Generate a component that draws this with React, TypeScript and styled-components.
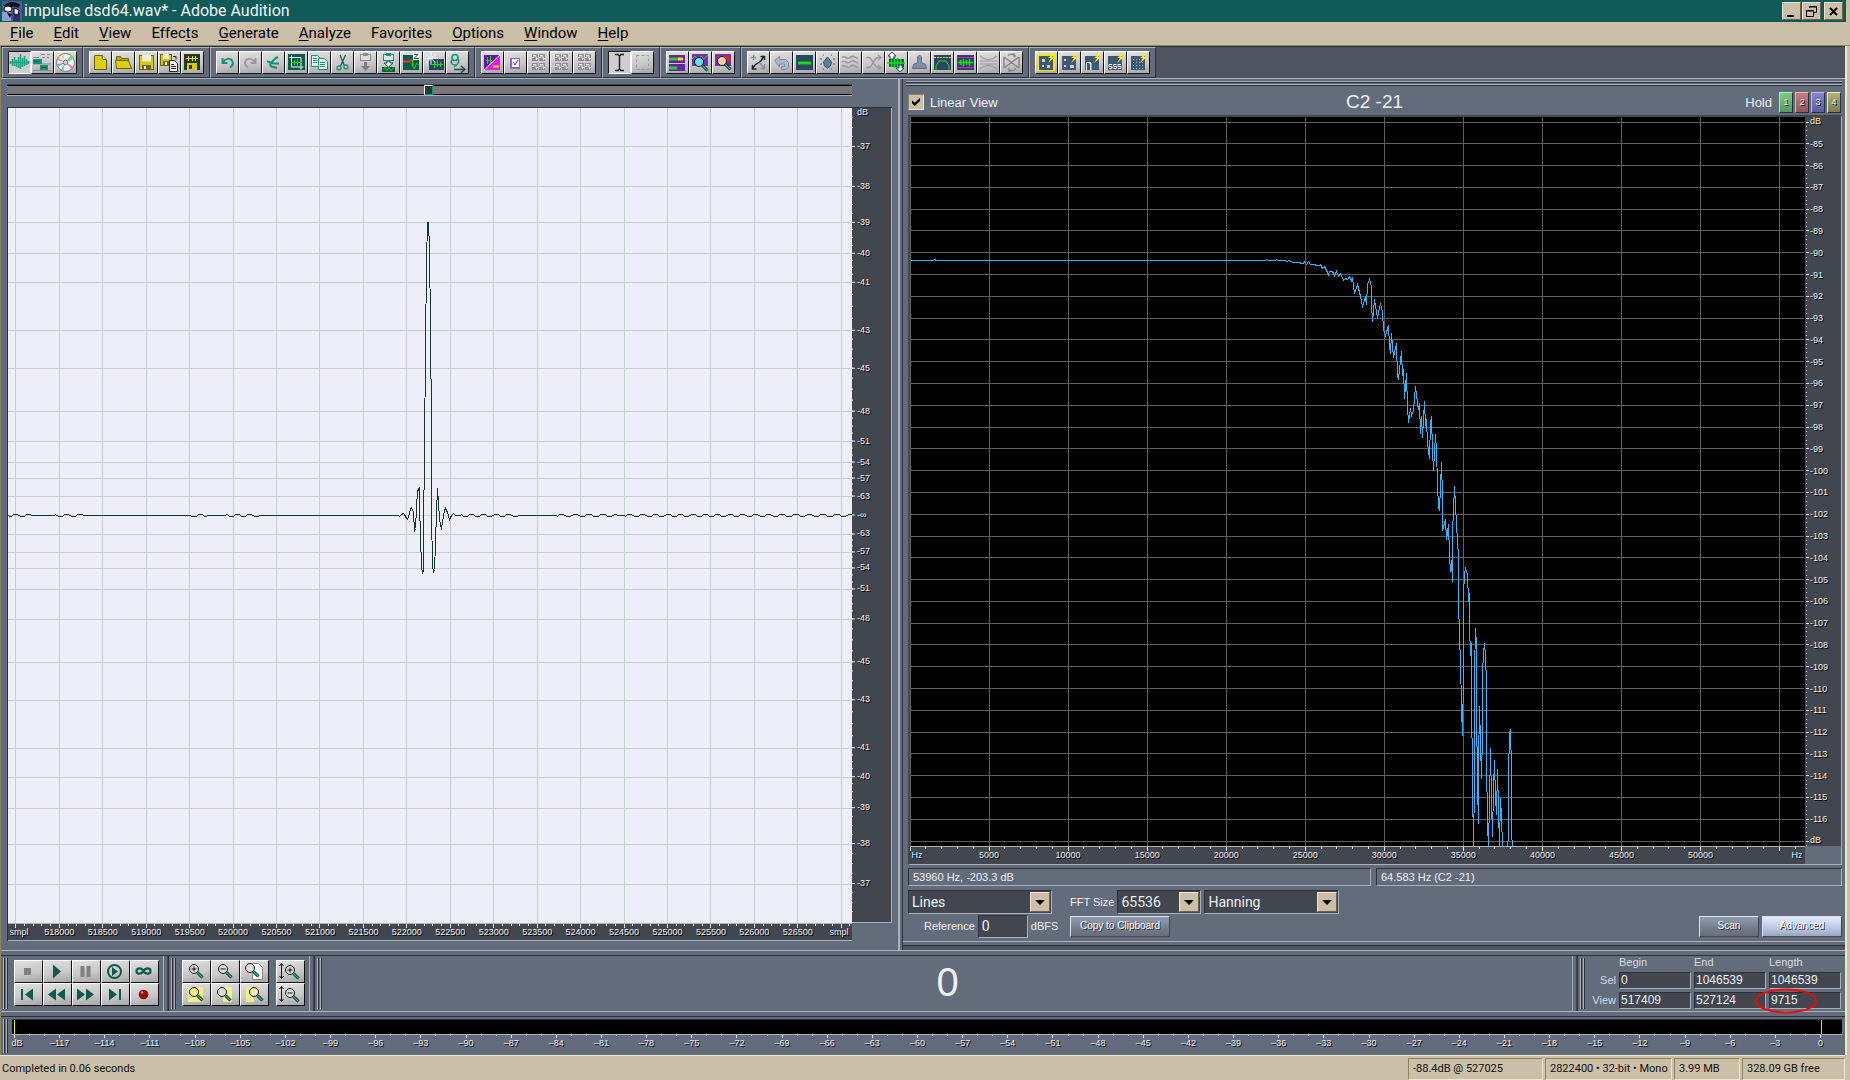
import React from "react";
import styled, { createGlobalStyle, css } from "styled-components";

const c = {
  teal: "#115a5a",
  sand: "#cbbfa8",
  sandLight: "#ece4d4",
  sandDark: "#8f8460",
  panel: "#636c7b",
  strip: "#4f5560",
  well: "#41464f",
  light: "#a9b0bc",
  dark: "#2c3038",
  text: "#eef0f4",
  wave: "#12382c",
  trace: "#2fb8ff",
};

const ui = `Roboto, "Liberation Sans", sans-serif`;
const sans = `"Liberation Sans", Arial, sans-serif`;

const GlobalStyle = createGlobalStyle`
  *, *::before, *::after { box-sizing: border-box; }
  body { margin: 0; background: ${c.sand}; font-family: ${sans}; }
  button, input, select { font: inherit; color: inherit; margin: 0; padding: 0; border: 0; border-radius: 0; background: none; }
  svg { display: block; }
`;

/* ---------- window frame ---------- */

const Frame = styled.div`
  display: flex;
  flex-direction: column;
  min-height: 100vh;
  background: ${c.sand};
`;

const TitleBar = styled.header`
  display: flex;
  align-items: center;
  height: 22px;
  margin-right: 4px;
  padding: 0 3px 0 2px;
  background: ${c.teal};
  color: #f2f4f2;
  font: 16px/22px ${ui};
`;

const TitleText = styled.h1`
  flex: 1;
  margin: 0 0 0 2px;
  font: inherit;
`;

const CaptionButton = styled.button<{ $apart?: boolean }>`
  display: grid;
  place-items: center;
  width: 19px;
  height: 18px;
  margin-left: ${(p) => (p.$apart ? 3 : 1)}px;
  background: ${c.sand};
  border: 1px solid;
  border-color: ${c.sandLight} #6b6248 #6b6248 ${c.sandLight};
`;

const MenuBar = styled.nav`
  display: flex;
  height: 24px;
  border-bottom: 1px solid ${c.sandDark};
  font: 15px/23px ${ui};
  color: #000;
`;

const MenuItem = styled.button`
  padding: 0 10px;
  u { text-underline-offset: 2px; text-decoration-thickness: 1px; }
`;

const Body = styled.div`
  display: flex;
  flex: 1;
  flex-direction: column;
  margin-right: 3px;
  border-left: 1px solid ${c.sandDark};
  border-right: 2px solid ${c.sandLight};
  background: ${c.panel};
  color: ${c.text};
`;

/* ---------- toolbar ---------- */

const Toolbar = styled.div`
  display: flex;
  height: 32px;
  padding-left: 1px;
  background: ${c.strip};
  border-top: 1px solid ${c.dark};
`;

const ToolGroup = styled.div`
  display: flex;
  align-items: center;
  padding: 0 5px;
  background: ${c.panel};
  border: 1px solid;
  border-color: ${c.light} ${c.dark} ${c.dark} ${c.light};
`;

const metal = css`
  background: linear-gradient(170deg, #e2e2e2 0%, #d2d2d2 30%, #c9c9cb 55%, #a6a6a8 100%);
`;

const ToolButton = styled.button<{ $pressed?: boolean }>`
  display: grid;
  place-items: center;
  width: 23px;
  height: 23px;
  border: 1px solid;
  ${(p) =>
    p.$pressed
      ? css`
          background: #d0cdd0;
          border-color: #1b1b1b #fff #fff #1b1b1b;
        `
      : css`
          ${metal}
          border-color: #fff #111 #111 #fff;
        `}
`;

/* ---------- panes ---------- */

const Panes = styled.main`
  display: grid;
  flex: 1;
  grid-template-columns: minmax(0, 897fr) 5px minmax(0, 942fr);
  border-top: 1px solid ${c.light};
`;

const WavePane = styled.section`
  display: flex;
  flex-direction: column;
  padding: 5px 6px 9px 6px;
`;

const Splitter = styled.div`
  background: ${c.panel};
  border-left: 2px solid ${c.light};
  border-right: 1px solid ${c.dark};
`;

const ScrollTrack = styled.div`
  display: grid;
  grid-template-columns: 417fr 9fr 419fr;
  height: 12px;
  margin: 0 40px 11px 0;
  background: #79777b;
  border-top: 1px solid ${c.well};
  border-bottom: 1px solid ${c.light};
  box-shadow: inset 0 1px 0 #000, inset 0 -1px 0 #000;
`;

const ScrollThumb = styled.button`
  grid-column: 2;
  background: #1c3c30;
  border: 1px solid;
  border-color: #fff #0d9a60 #0d9a60 #fff;
`;

const WaveFrame = styled.div`
  display: grid;
  flex: 1;
  grid-template-columns: minmax(0, 1fr) 40px;
  grid-template-rows: minmax(0, 1fr) 18px;
  border-top: 1px solid ${c.dark};
  border-left: 1px solid ${c.dark};
`;

const Plot = styled.div<{ $bg: string }>`
  min-height: 200px;
  background: ${(p) => p.$bg};
  contain: size;
  svg { width: 100%; height: 100%; }
`;

const Ruler = styled.div<{ $right?: boolean; $bottom?: boolean; $top?: boolean; $bg?: string }>`
  position: relative;
  background: ${(p) => p.$bg ?? c.well};
  border: 0 solid ${c.light};
  border-right-width: ${(p) => (p.$right ? 1 : 0)}px;
  border-bottom-width: ${(p) => (p.$bottom ? 1 : 0)}px;
  border-top-width: ${(p) => (p.$top ? 1 : 0)}px;
  font: 9px/12px ${sans};
  text-shadow: 1px 1px 0 #000;
  contain: size;
  svg { width: 100%; height: 100%; }
`;

const RowLabel = styled.span`
  position: absolute;
  left: 5px;
  transform: translateY(-50%);
  white-space: nowrap;
`;

const ColumnLabel = styled.span`
  position: absolute;
  top: 2px;
  transform: translateX(-50%);
  white-space: nowrap;
`;

const SpectrumPane = styled.section`
  display: flex;
  flex-direction: column;
  padding-top: 2px;
`;

const SpectrumBody = styled.div`
  display: flex;
  flex: 1;
  flex-direction: column;
  padding: 0 3px 3px 5px;
`;

const PaneGrip = styled.div`
  height: 5px;
  margin: 0 0 0 -2px;
  border: 1px solid ${c.dark};
  border-width: 0 0 1px;
  background: linear-gradient(${c.light} 1px, ${c.dark} 1px 2px, ${c.panel} 2px 3px, ${c.light} 3px);
`;

const PaneFoot = styled.div`
  height: 9px;
  border-top: 1px solid ${c.light};
  border-bottom: 4px solid ${c.strip};
  box-shadow: inset 0 -1px 0 ${c.dark};
`;

const SpectrumHead = styled.div`
  display: grid;
  grid-template-columns: 1fr auto 1fr;
  align-items: center;
  height: 29px;
  padding: 3px 1px 0 0;
  font-size: 13px;
`;

const CheckLabel = styled.label`
  display: flex;
  align-items: center;
  gap: 6px;
`;

const Check = styled.input`
  appearance: none;
  display: grid;
  place-items: center;
  width: 16px;
  height: 16px;
  background: ${c.sand};
  border: 1px solid;
  border-color: ${c.sandDark} ${c.sandLight} ${c.sandLight} ${c.sandDark};
  &:checked::after {
    content: "";
    width: 8px;
    height: 8px;
    background: #000;
    clip-path: polygon(0 30%, 35% 60%, 100% 0, 100% 36%, 35% 100%, 0 66%);
  }
`;

const NoteName = styled.h2`
  margin: 0;
  font: 19px/22px ${sans};
`;

const HoldSet = styled.div`
  display: flex;
  align-items: center;
  justify-content: flex-end;
  gap: 2px;
`;

const HoldCaption = styled.span`
  margin-right: 5px;
`;

const HoldButton = styled.button<{ $hue: string; $edge: string }>`
  width: 14px;
  height: 21px;
  background: linear-gradient(${(p) => p.$edge}44, #0000 40%, #00000033), ${(p) => p.$hue};
  border: 1px solid;
  border-color: ${(p) => p.$edge} ${c.dark} ${c.dark} ${(p) => p.$edge};
  font: 9px/19px ${sans};
  text-shadow: 1px 1px 0 #000;
`;

const SpectrumFrame = styled.div`
  display: grid;
  flex: 1;
  grid-template-columns: minmax(0, 1fr) 36px;
  grid-template-rows: minmax(0, 1fr) 18px;
  border: 1px solid;
  border-width: 2px 1px 1px 2px;
  border-color: ${c.well} ${c.light} ${c.light} ${c.well};
`;

const Readouts = styled.div`
  display: grid;
  grid-template-columns: 463fr 466fr;
  gap: 5px;
  margin: 3px 0 4px;
`;

const Readout = styled.output`
  height: 18px;
  padding-left: 4px;
  border: 1px solid;
  border-color: ${c.dark} ${c.light} ${c.light} ${c.dark};
  font: 11px/16px ${sans};
`;

const Controls = styled.div`
  display: flex;
  font-size: 11px;
`;

const ControlColumn = styled.div<{ $width?: number; $fill?: boolean }>`
  width: ${(p) => (p.$width ? `${p.$width}px` : "auto")};
  flex: ${(p) => (p.$fill ? 1 : "none")};
`;

const ControlRow = styled.div<{ $end?: boolean; $indent?: boolean }>`
  display: flex;
  align-items: center;
  justify-content: ${(p) => (p.$end ? "flex-end" : "flex-start")};
  gap: 3px;
  height: 24px;
  padding-left: ${(p) => (p.$indent ? 16 : 0)}px;
`;

const sunken = css`
  background: ${c.well};
  border: 1px solid;
  border-color: ${c.dark} ${c.light} ${c.light} ${c.dark};
`;

const Combo = styled.span<{ $width: number }>`
  display: flex;
  width: ${(p) => p.$width}px;
  height: 24px;
  padding: 1px;
  ${sunken}
`;

const ComboSelect = styled.select`
  appearance: none;
  flex: 1;
  min-width: 0;
  padding-left: 2px;
  font: 14px/20px ${ui};
`;

const ComboArrow = styled.span`
  display: grid;
  place-items: center;
  width: 20px;
  background: ${c.sand};
  border: 1px solid;
  border-color: ${c.sandLight} #6b6248 #6b6248 ${c.sandLight};
  &::after {
    content: "";
    border: 5px solid transparent;
    border-top-color: #000;
    border-bottom: 0;
  }
`;

const RefInput = styled.input`
  width: 50px;
  height: 23px;
  padding-left: 3px;
  ${sunken}
  font: 14px/20px ${ui};
`;

const PushButton = styled.button<{ $width: number; $lit?: boolean }>`
  width: ${(p) => p.$width}px;
  height: 21px;
  background: ${(p) =>
    p.$lit ? "linear-gradient(#e4ecff, #b9c6e2 60%, #9aa6c0)" : "linear-gradient(#929eb0, #737c8c 60%, #666e7c)"};
  border: 1px solid;
  border-color: #d5e3f2 ${c.well} ${c.well} #d5e3f2;
  font: 10px/18px ${sans};
  color: #fff;
  text-shadow: 1px 1px 0 ${c.dark};
`;

/* ---------- docks ---------- */

const DockRule = styled.div`
  height: 6px;
  border-top: 1px solid ${c.light};
  border-bottom: 1px solid ${c.dark};
`;

const Dock = styled.section`
  display: flex;
  height: 55px;
`;

const DockGroup = styled.div<{ $fill?: boolean }>`
  display: flex;
  flex: ${(p) => (p.$fill ? 1 : "none")};
  padding-left: 2px;
`;

const Grip = styled.div`
  flex: none;
  width: 6px;
  margin: 2px 0;
  background: linear-gradient(90deg, ${c.light} 1px, ${c.dark} 1px 2px, ${c.panel} 2px 3px, ${c.light} 3px 4px, ${c.dark} 4px 5px, ${c.panel} 5px);
`;

const DockEdge = styled.div`
  flex: none;
  width: 6px;
  border-left: 1px solid ${c.light};
  border-right: 1px solid ${c.dark};
  box-shadow: inset -1px 0 0 ${c.well};
`;

const KeyPad = styled.div<{ $cols: number; $after: number }>`
  display: grid;
  grid-template-columns: repeat(${(p) => p.$cols}, 29px);
  align-content: start;
  padding-top: 4px;
  margin: 0 ${(p) => p.$after}px 0 5px;
`;

const Columns = styled.div`
  display: flex;
`;

const Key = styled.button`
  display: grid;
  place-items: center;
  height: 23px;
  padding-right: 2px;
  ${metal}
  border: 1px solid;
  border-color: #fff #111 #111 #fff;
`;

const Counter = styled.output`
  flex: 1;
  font: 40px/53px ${sans};
  text-align: center;
`;

const Range = styled.div`
  display: grid;
  grid-template-columns: 30px repeat(3, 72px);
  grid-template-rows: 13px 17px 17px;
  gap: 3px;
  padding-right: 4px;
  font-size: 11px;
  line-height: 13px;
  color: #d7dbe2;
`;

const RangeName = styled.span`
  align-self: center;
  text-align: right;
`;

const RangeCell = styled.div`
  position: relative;
  display: flex;
`;

const RangeInput = styled.input`
  width: 100%;
  padding-left: 1px;
  ${sunken}
  font: 12px/15px ${sans};
  color: ${c.text};
`;

const Ring = styled.svg`
  position: absolute;
  left: -15px;
  top: -4px;
  width: 64px;
  height: 26px;
  pointer-events: none;
`;

const MeterDock = styled.section`
  display: flex;
  height: 38px;
  padding: 0 3px 0 2px;
`;

const Meter = styled.div`
  display: flex;
  flex: 1;
  flex-direction: column;
  margin: 2px 0 2px 3px;
`;

const MeterBar = styled.div`
  display: grid;
  grid-template-columns: 2fr 1px 1807fr 1px 20fr;
  height: 15px;
  background: #000;
  border-top: 1px solid ${c.dark};
  i:nth-child(1) { grid-column: 2; background: #ff0; }
  i:nth-child(2) { grid-column: 4; background: #c8ccd2; }
`;

const MeterRuler = styled(Ruler)`
  flex: 1;
`;

const StatusBar = styled.footer`
  display: flex;
  gap: 2px;
  height: 25px;
  margin-right: 5px;
  padding-top: 2px;
  border-top: 1px solid ${c.sandLight};
  font: 11px/22px ${ui};
  color: #111;
`;

const StatusMessage = styled.span`
  flex: 1;
  padding-left: 2px;
`;

const StatusCell = styled.span<{ $width: number }>`
  width: ${(p) => p.$width}px;
  padding-left: 4px;
  border: 1px solid;
  border-color: ${c.sandDark} ${c.sandLight} ${c.sandLight} ${c.sandDark};
  line-height: 20px;
  white-space: nowrap;
`;

/* ---------- icons ---------- */

const g1 = "#17917a";
const g2 = "#0f5a4c";
const lime = "#11e011";
const navy = "#2c4560";
const grey = "#9b9b9d";

const S = ({ d, s = g2, w = 1, f = "none" }: { d: string; s?: string; w?: number; f?: string }) => (
  <path d={d} stroke={s} strokeWidth={w} fill={f} />
);
const B = ({ x, y, w, h, f }: { x: number; y: number; w: number; h: number; f: string }) => (
  <rect x={x} y={y} width={w} height={h} fill={f} />
);

const bolt = <S d="M18 1l-6 5h3l-3 5 7-6h-3l3-4z" s="none" f="#ffee10" />;
const floppy = (x: number, y: number, s: number) => (
  <g>
    <B x={x} y={y} w={s} h={s} f="#6b6400" />
    <B x={x + 1} y={y + 1} w={s - 2} h={s - 2} f="#d6c90e" />
    <B x={x + 3} y={y} w={s - 6} h={s / 2 - 1} f="#eeeedd" />
    <B x={x + 3} y={y + s - 5} w={s - 6} h={4} f="#6b6400" />
    <B x={x + 5} y={y + s - 4} w={2} h={3} f="#eee" />
  </g>
);
const groupGrid = (
  <g>
    {[2, 11].map((y) =>
      [4, 11].map((x) => (
        <g key={`${x}${y}`}>
          <B x={x} y={y} w={6} h={7} f="#8f8f91" />
          <S d={`M${x} ${y + 3.5}h2v-2h2v3h2M${x + 1} ${y + 1.5}h1M${x + 4} ${y + 5.5}h1`} s="#e6e6e6" />
        </g>
      )),
    )}
  </g>
);
const clip = (stroke: string, fill: string) => (
  <g>
    <B x={5} y={2} w={11} h={7} f={stroke} />
    <B x={6} y={3} w={9} h={5} f={fill} />
    <B x={8} y={1} w={5} h={3} f={stroke} />
  </g>
);
const rackBox = <B x={3} y={4} w={14} h={14} f="#40586f" />;
const lens = (x: number, y: number, fill = "#dcdcdc") => (
  <g>
    <circle cx={x} cy={y} r={4.5} stroke="#111" fill={fill} />
    <S d={`M${x + 3.5} ${y + 3.5}l5 5`} s="#111" w={3} />
    <S d={`M${x + 3.5} ${y + 3.5}l5 5`} s="#20c090" w={1.4} />
  </g>
);

const icons: Record<string, React.ReactNode> = {
  wave: (
    <path
      d="M1.500 9v3M3.500 7v7M5.500 5v9M7.500 8v7M9.500 5v11M11.500 2v15M13.500 6v9M15.500 4v10M17.500 7v6M19.500 9v3M1 10.500h19"
      stroke="#22a585"
      strokeWidth={1.6}
    />
  ),
  multitrack: (
    <g>
      <S d="M9 2.5h4M15 2.5h3M10 5.5h3M15 5.5h2M1 5.5h6M1 12h18M1 18.5h18" s="#8b8b8b" />
      <B x={1} y={7} w={9} h={5} f={g1} />
      <B x={8} y={13} w={8} h={5} f={g1} />
      <S d="M2 9.5h6M9 15.5h6" s={g2} />
    </g>
  ),
  cd: (
    <g>
      <circle cx={10.5} cy={10.5} r={9} fill="#f3f3f6" stroke="#777" />
      <S d="M10.5 10.5L6 3l2-1z" s="none" f="#e6e020" />
      <S d="M10.5 10.5L16 3l3 4z" s="none" f="#6fd890" />
      <S d="M10.5 10.5L2 12l1 3z" s="none" f="#7ac" />
      <S d="M10.5 10.5L18 14l-2 3z" s="none" f="#e08ad8" />
      <S d="M10.5 10.5L8 19l-2-1z" s="none" f="#60d080" />
      <S d="M10.5 10.5L2 8l1-2z" s="none" f="#d080d8" />
      <circle cx={10.5} cy={10.5} r={2.3} fill="#ccc" stroke="#777" />
    </g>
  ),
  file: (
    <g>
      <S d="M4.500 3.500h8l4 4v10h-12z" s="#6b6400" f="#dccf10" />
      <S d="M12.500 3.500v4h4" s="#6b6400" f="#fff79a" />
    </g>
  ),
  open: (
    <g>
      <S d="M3.500 16.500v-12h4l1 2h7v3" s="#6b6400" f="#b8ac00" />
      <S d="M3.500 16.500l-1-8h13l3 8z" s="#6b6400" f="#dccf10" />
    </g>
  ),
  save: floppy(3, 3, 15),
  saveAs: (
    <g>
      {floppy(1, 2, 12)}
      <S d="M10.500 8.500h5l3 3v8h-8z" s="#222" f="#f2f2f2" />
      <S d="M12 12.500h3M12 14.500h5M12 16.500h5M14 4.500h3v3" s="#222" />
    </g>
  ),
  saveAll: (
    <g>
      <B x={2} y={2} w={16} h={16} f="#243822" />
      <S d="M4 6.500h3M6.500 4v5M7 6.500h4M10.500 4v5M11 6.500h5M13.500 4v5" s="#f4e400" />
      <B x={5} y={11} w={10} h={7} f="#d6c90e" />
      <B x={7} y={13} w={3} h={4} f="#243822" />
    </g>
  ),
  undo: <S d="M5.500 6v5h5M6 10.500c2-4 7-5 9-2s1 5-2 7" s={g1} w={2} />,
  redo: <S d="M15.500 6v5h-5M15 10.500c-2-4-7-5-9-2s-1 5 2 7" s={grey} w={2} />,
  mix: <S d="M4 9.500c3 0 4 2 7 2h5M15 5c-3 1-5 4-7 6s0 4 3 4l3 1" s={g1} w={2} />,
  crop: (
    <g>
      <B x={2} y={2} w={17} h={16} f={g2} />
      <S d="M5.500 3v12h12M3 5.500h12v12" s="#f2f2f2" />
      <S d="M5 10.500h11M8.500 8v5M11.500 7v7" s={lime} />
    </g>
  ),
  copy: (
    <g>
      <S d="M2.500 3.500h6l2 2v9h-8z" s={g1} f="#e8f0ec" />
      <S d="M9.500 6.500h6l3 3v8h-9z" s={g1} f="#e8f0ec" />
      <S d="M4 6.500h4M4 8.500h4M4 10.500h4M11 10.500h5M11 12.500h5M11 14.500h5" s={g1} />
    </g>
  ),
  cut: (
    <g>
      <S d="M8 3l4.500 11M13.500 3l-5 11" w={1.2} />
      <circle cx={7} cy={16} r={2} fill="none" stroke={g1} strokeWidth={1.3} />
      <circle cx={14} cy={15} r={2} fill="none" stroke={g1} strokeWidth={1.3} />
    </g>
  ),
  pasteOff: (
    <g>
      {clip("#8b8b8d", "#ddd")}
      <S d="M9 10h3v4h3l-4.500 5-4.500-5h3z" s="none" f="#7e7e80" />
    </g>
  ),
  paste: (
    <g>
      {clip(g1, "#d8f0e4")}
      <S d="M9 9h3v2h3l-4.500 4-4.500-4h3z" s={g2} f="#fff" />
      <B x={4} y={15} w={13} h={5} f={g2} />
      <S d="M5 17.500l2-2 2 3 2-3 2 3 3-3" s={lime} />
    </g>
  ),
  mixPaste: (
    <g>
      <B x={2} y={3} w={16} h={15} f={g2} />
      <S d="M2 9.500h6l2-1h3" s="#e33" w={2} />
      <S d="M11.500 8v6l2 3 2-6 2 2" s={lime} />
      <B x={12} y={1} w={7} h={7} f="#f2f2f2" />
      <S d="M13 2.500h4l-4 4h5" s={g2} />
    </g>
  ),
  noise: (
    <g>
      <B x={5} y={7} w={15} h={11} f={navy} />
      <S d="M6 12.500h13M10.500 9v7M13.500 8v7M16.500 10v5" s={lime} />
      <S d="M2 2l10 9M12 2L2 11M7 0v12M1 6.500h12" s="#e9fbff" />
    </g>
  ),
  script: (
    <g>
      <circle cx={8} cy={5.500} r={3} fill="none" stroke={g1} strokeWidth={1.6} />
      <S d="M5 8c-2 3 0 5 4 5M11 7c2 3-1 6-4 8" s={g1} w={1.5} />
      <S d="M7 17.500h10M14 14l4 3.500-4 3" s={g2} w={1.5} />
    </g>
  ),
  invert: (
    <g>
      <B x={2} y={3} w={16} h={15} f="#5b1a9a" />
      <S d="M18 3v15H2z" s="none" f="#e018e0" />
      <S d="M2 18L18 3" s="#fff" />
      <S d="M4 8.500h6M5.500 5v7M8.500 4v7" s={lime} />
      <S d="M11 14.500h6" s="#ffe000" w={2} />
    </g>
  ),
  tick: (
    <g>
      <B x={5} y={6} w={10} h={11} f="#8a6ab8" />
      <B x={7} y={7} w={7} h={8} f="#f6f2fa" />
      <S d="M8.500 10.500l1.500 2.500 3-5" s="#6a32a8" />
    </g>
  ),
  group: groupGrid,
  ibeam: <S d="M6 2.500h3l1.500 1.500L12 2.500h3M10.500 4v13M6 18.500h3l1.500-1.500 1.500 1.500h3" s="#222" w={1.5} />,
  marquee: <rect x={4.500} y={3.500} width={12} height={14} fill="none" stroke="#9a9a9a" strokeDasharray="3 2" />,
  tracks: (
    <g>
      <B x={2} y={3} w={16} h={16} f="#6b1fa8" />
      <S d="M2 7h9M2 16h8" s={lime} w={3} />
      <S d="M11 7h5" s="#ffe000" w={3} />
      <S d="M2 11.500h16" s="#d8b8f0" />
    </g>
  ),
  scope: (
    <g>
      <B x={2} y={2} w={16} h={12} f="#7a2bb0" />
      <S d="M2 7l3-3 3 4 3-4 3 3 4-4" s={lime} />
      {lens(9, 10, "#5fe6f2")}
    </g>
  ),
  phase: (
    <g>
      <B x={2} y={2} w={16} h={12} f="#7a2bb0" />
      <B x={4} y={4} w={12} h={5} f="#e22" />
      {lens(9, 9, "#ffd0a0")}
    </g>
  ),
  swap: (
    <g>
      <S d="M4 17l3-4 6-4 3-5M12.500 4.500h4v3.500M4.500 13v4h4" s="#222" w={1.5} />
      <S d="M3 5.500h5M5.500 3v5M12 11l4 5M16.500 12v4.500h-4" s="#8792a6" w={1.5} />
    </g>
  ),
  back: <S d="M3.500 8.500l5-4v3h6l3 3v5l-3 2h-4v-3h3v-2.500h-5v3z" s="#7c8ca0" f="#aab8c8" />,
  level: (
    <g>
      <B x={2} y={3} w={17} h={15} f={navy} />
      <S d="M4 11h13" s={lime} w={3} />
    </g>
  ),
  drop: (
    <g>
      <S d="M10.500 5l4 5-1 4-3 2-3-2-1-4z" s="#35506c" f="#5d7d9c" />
      <S d="M3 7h2M3 12h2M16 7h2M16 12h2M6 17h1M14 17h1M6 3h1M14 3h1" s="#555" />
    </g>
  ),
  ripple: <S d="M2 5.500c3-3 5 3 8 0s5 0 8 1M2 10c3-3 5 3 8 0s5 0 8 1M2 14.500c3-3 5 3 8 0s5 0 8 1" s={grey} w={1.5} />,
  cross: <S d="M3 5.500h3c3 0 5 10 9 10h3M3 15.500h3c3 0 5-10 9-10h3M15 3l3 2.500-3 2.500M15 13l3 2.500-3 2.500" s={grey} w={1.5} />,
  amp: (
    <g>
      <B x={3} y={7} w={15} h={8} f={g2} />
      <S d="M1 11h18M5.500 7v8M8.500 5v11M11.500 6v9M14.500 7v8" s={lime} w={1.5} />
      <S d="M6 0l4 4H8v3H4V4H2z" s={navy} f="#fff" />
      <S d="M14 20l4-4h-2v-3h-3v3h-3z" s={navy} f="#fff" />
    </g>
  ),
  bell: <S d="M3.500 16.500l1-4 4-2V5l2-2 2 2v5.500l4 2 1 4z" s="#5c6e86" f="#7f90a6" />,
  filter: (
    <g>
      <B x={2} y={3} w={17} h={15} f={navy} />
      <path d="M2 5.500h17" stroke="#e8dc20" strokeDasharray="2 1" />
      <S d="M4 18V14l3-5h7l3 5v4" s={lime} />
    </g>
  ),
  limiter: (
    <g>
      <B x={2} y={3} w={17} h={15} f={navy} />
      <S d="M2 5.500h17M2 15.500h17" s="#f0f" />
      <S d="M3 10.500h15M5.500 8v5M8.500 7v7M11.500 8v5M14.500 7v7" s={lime} w={1.5} />
    </g>
  ),
  stretch: <S d="M2 4c6 5 11 5 17 0M2 17c6-5 11-5 17 0M2 9h17M2 12h17" s={grey} w={1.2} />,
  tempo: <S d="M3 5l15 11M3 16L18 5M3 5v11M18 5v11M7 3.500c3-2 6-1 8 1M7 17.500c3 2 6 1 8-1M13 1v4M8 16v4" s="#858587" w={1.4} />,
  fx1: (
    <g>
      <B x={1} y={2} w={18} h={17} f="#f0e400" />
      {rackBox}
      <B x={6} y={7} w={3} h={3} f="#ccd" />
      <B x={11} y={13} w={3} h={3} f="#ccd" />
      <B x={6} y={13} w={2} h={2} f="#ccd" />
      {bolt}
    </g>
  ),
  fx2: (
    <g>
      {rackBox}
      <B x={5} y={7} w={2} h={2} f="#ccd" />
      <B x={11} y={13} w={4} h={3} f="#ccd" />
      <B x={5} y={13} w={2} h={2} f="#ccd" />
      {bolt}
    </g>
  ),
  fx3: (
    <g>
      {rackBox}
      <S d="M4.500 18v-7.500h4V18M7 11h2v7" s="#e8e8f0" />
      {bolt}
    </g>
  ),
  fx4: (
    <g>
      {rackBox}
      <S d="M7 12.500H4v2h3v2H4M11.500 12.500h-3v2h3v2h-3M16 12.500h-3v2h3v2h-3" s="#e8e8f0" />
      {bolt}
    </g>
  ),
  fx5: (
    <g>
      {rackBox}
      <path d="M5 7.500h10M5 10.500h10M5 13.500h10M5 16.500h10" stroke="#a8b4c4" strokeDasharray="1 2" />
      {bolt}
    </g>
  ),
  stop: <B x={7} y={7} w={7} h={7} f="#808082" />,
  play: <S d="M7 3.500l8 7-8 7z" s="none" f={g2} />,
  pause: <S d="M7.500 5v11M13.500 5v11" s="#808082" w={4} />,
  playLoop: (
    <g>
      <circle cx={10.500} cy={10.500} r={6.500} fill="none" stroke={g2} strokeWidth={2} />
      <S d="M8 6l6 4.500L8 15z" s="none" f={g2} />
    </g>
  ),
  loop: <S d="M10.500 10C8.500 6.500 3.500 6.500 3.500 10s5 3.500 7 0 7-3.500 7 0-5 3.500-7 0z" s={g2} w={2.2} />,
  start: <S d="M4 5v11h2V5zM16 4.500v12L8 10.500z" s="none" f={g2} />,
  rewind: <S d="M10 4.500v12l-8-6zM19 4.500v12l-8-6z" s="none" f={g2} />,
  forward: <S d="M2 4.500v12l8-6zM11 4.500v12l8-6z" s="none" f={g2} />,
  end: <S d="M15 5v11h2V5zM5 4.500v12l8-6z" s="none" f={g2} />,
  record: (
    <g>
      <circle cx={10.500} cy={10.500} r={4.800} fill="#9a1010" />
      <circle cx={9} cy={8.500} r={1.300} fill="#e88" />
    </g>
  ),
  zoomIn: (
    <g>
      {lens(9, 8)}
      <S d="M6.500 8h5M9 5.500v5" s="#111" />
    </g>
  ),
  zoomOut: (
    <g>
      {lens(9, 8)}
      <S d="M6.500 8h5" s="#111" />
    </g>
  ),
  zoomFull: (
    <g>
      <S d="M9.500 2.500h6l4 4v12h-10z" s="#888" f="#fbfbfb" />
      {lens(7, 7)}
    </g>
  ),
  zoomSel: (
    <g>
      <B x={3} y={3} w={15} h={15} f="#f2ee86" />
      {lens(9, 8, "#f2ee86")}
    </g>
  ),
  zoomLeft: (
    <g>
      <B x={9} y={3} w={9} h={15} f="#f2ee86" />
      {lens(8, 8)}
    </g>
  ),
  zoomRight: (
    <g>
      <B x={3} y={3} w={8} h={15} f="#f2ee86" />
      {lens(11, 8, "#efebb0")}
    </g>
  ),
  vZoomIn: (
    <g>
      <S d="M2.500 3v14M.500 5l2-2.500 2 2.500M.500 15l2 2.500 2-2.500" s="#111" />
      {lens(11, 9)}
      <S d="M8.500 9h5M11 6.500v5" s="#111" />
    </g>
  ),
  vZoomOut: (
    <g>
      <S d="M2.500 3v14M.500 5l2-2.500 2 2.500M.500 15l2 2.500 2-2.500" s="#111" />
      {lens(11, 9)}
      <S d="M8.500 9h5" s="#111" />
    </g>
  ),
};

const Icon = ({ name }: { name: string }) => (
  <svg width="21" height="21" viewBox="0 0 21 21" aria-hidden="true">
    {icons[name]}
  </svg>
);

const AppLogo = () => (
  <svg width="20" height="20" viewBox="0 0 20 20" aria-hidden="true">
    <rect width="20" height="20" fill="#4c5a9c" />
    <path d="M0 11h9v9H0z" fill="#8d9fd8" />
    <path d="M11 12h7v8h-7z" fill="#2d2f66" />
    <path d="M2 5c3-5 12-5 16-1l-2 3c-3-2-7-2-9 1z" fill="#0b0b12" />
    <ellipse cx="6" cy="8" rx="4" ry="3" fill="#f4f4f8" stroke="#0b0b12" />
    <path d="M12 7l5 2-1 5-4-1z" fill="#e6e6ee" stroke="#0b0b12" />
    <path d="M5 12l5 1-2 4z" fill="#0b0b12" />
  </svg>
);

/* ---------- data ---------- */

const menus: [string, string, string][] = [
  ["", "F", "ile"],
  ["", "E", "dit"],
  ["", "V", "iew"],
  ["Effec", "t", "s"],
  ["", "G", "enerate"],
  ["", "A", "nalyze"],
  ["Favo", "r", "ites"],
  ["", "O", "ptions"],
  ["", "W", "indow"],
  ["", "H", "elp"],
];

const toolGroups = [
  ["wave", "multitrack", "cd"],
  ["file", "open", "save", "saveAs", "saveAll"],
  ["undo", "redo", "mix", "crop", "copy", "cut", "pasteOff", "paste", "mixPaste", "noise", "script"],
  ["invert", "tick", "group", "group", "group"],
  ["ibeam", "marquee"],
  ["tracks", "scope", "phase"],
  ["swap", "back", "level", "drop", "ripple", "cross", "amp", "bell", "filter", "limiter", "stretch", "tempo"],
  ["fx1", "fx2", "fx3", "fx4", "fx5"],
];

const wave = { left: 8, top: 108, width: 844, height: 815, mid: 515, first: 517409, span: 9715 };
const waveX = (sample: number) => wave.left + ((sample - wave.first) / wave.span) * wave.width;

const waveLevels: [string, number][] = [
  ["-63", 19],
  ["-57", 37],
  ["-54", 53],
  ["-51", 74],
  ["-48", 104],
  ["-45", 147],
  ["-43", 185],
  ["-41", 233],
  ["-40", 262],
  ["-39", 293],
  ["-38", 329],
  ["-37", 369],
];
const waveRows = waveLevels.flatMap(([label, d]) => [
  { label, y: wave.mid - d },
  { label, y: wave.mid + d },
]);

const minorLevels = waveLevels.flatMap(([, d], i) => {
  const next = waveLevels[i + 1]?.[1] ?? 407;
  const parts = next - d > 25 ? 4 : 3;
  return Array.from({ length: parts }, (_, k) => d + ((next - d) * k) / parts);
});

const samples = Array.from({ length: 20 }, (_, i) => 517500 + i * 500);
const minorSamples = Array.from({ length: 97 }, (_, i) => 517500 + i * 100);

const ripples: [number, number][] = [
  [9, 30],
  [55, 83],
  [190, 206],
  [226, 258],
  [461, 518],
  [557, 616],
  [625, 851],
];
const baseline = Array.from({ length: 845 }, (_, i) => {
  const x = 7 + i;
  const active = ripples.some(([a, b]) => x >= a && x <= b);
  const phase = Math.sin((x / 13) * Math.PI * 2 + Math.sin(x / 37));
  return `${x},${active ? (phase > 0.3 ? 514 : phase < -0.3 ? 516 : 515) : 515}`;
});

const toPoints = (flat: string, ox: number, oy: number) =>
  flat
    .split(" ")
    .map((p) => p.split(",").map(Number))
    .map(([x, y]) => `${Math.floor(ox + x / 3)},${Math.floor(oy + y / 3)}`);

const impulse = toPoints(
  "55,946 58,949 64,943 69,940 73,943 78,955 82,958 87,940 91,925 94,922 99,937 104,991 107,985 110,922 113,874 117,862 119,913 122,1009 125,1100 128,1118 130,1110 131,997 134,751 137,445 140,184 143,68 146,68 149,145 151,379 153,685 155,946 158,1093 161,1117 163,1108 166,1033 169,934 173,865 176,907 179,958 184,988 188,964 193,930 196,925 201,937 208,958 213,946 219,941 226,946",
  380,
  200,
);
const wavePoints = [...baseline.slice(0, 391), ...impulse, ...baseline.slice(449)].join(" ");

const spec = { left: 910, top: 117, width: 895, height: 729, hz: 79.05 / 5000, dbTop: 122, db: 21.79 };
const specX = (hz: number) => spec.left + hz * spec.hz;
const specY = (i: number) => spec.dbTop + i * spec.db;

const specPoints = [
  "910,260 933,260 934,259 936,260",
  ...toPoints(
    "0,61 107,61 109,58 112,61 137,61 139,58 142,61 165,61 170,64 178,62 188,67 209,67 213,70 219,70 223,63 229,74 234,64 240,73 254,74 258,76 267,76 270,73 276,86 283,79 290,92 296,103 299,94 306,94 312,106 318,94 325,109 330,99 341,121 347,114 352,118 358,109 364,122 367,112 374,160 383,133 392,170 398,200 401,190 405,169 409,193 413,133 417,118 423,140 425,190 428,245 433,179 438,217 441,233 450,190 456,217 460,268 467,287 475,256 478,320 481,341 484,280 491,353 498,310 503,410 506,415 513,334 518,405 519,388 523,475 529,400 533,503 536,548 541,505 544,526 549,512 552,474 555,439 561,490 565,508 568,490 571,580 574,529 577,592 582,484 586,556 588,538 592,610 598,655 601,550 604,529 608,632 611,692 616,583 620,632 623,730 626,803 628,811 633,667 636,770 638,871 645,838 649,899 655,853 659,947 662,993 665,960 667,1025 668,881 672,739 675,795 679,852 681,903 684,948",
    1230,
    240,
  ),
  ...toPoints(
    "176,174 179,295 182,360 185,503 188,585 189,402 191,167 193,100 196,85 202,103 206,183 208,160 209,255 212,347 214,310 215,435 218,743 221,918 223,729 224,396 227,265 229,312 230,491 233,738 235,851 236,676 239,498 241,608 244,716 246,579 247,402 250,336 253,310 256,348 259,430 260,651 263,855 266,915 269,786 272,625 275,783 278,890 281,745 283,660 287,772 289,824 292,688 295,806 297,918 301,774 304,828 306,920 323,920 324,885 326,705 329,579 331,568 333,687 335,876 338,920",
    1400,
    540,
  ),
].join(" ");

const dbRows = Array.from({ length: 34 }, (_, i) => i);
const dbTicks = Array.from({ length: 167 }, (_, i) => i / 5);
const kiloHz = Array.from({ length: 57 }, (_, i) => i);
const hzLabels = Array.from({ length: 10 }, (_, i) => (i + 1) * 5000);

const meter = { left: 12, width: 1830 };
const meterX = (i: number) => 14.5 + i * 15.05;
const meterSteps = Array.from({ length: 121 }, (_, i) => i);

const pct = (v: number, start: number, size: number) => `${((v - start) / size) * 100}%`;
const px = (v: number) => Math.floor(v) + 0.5;

/* ---------- charts ---------- */

const WavePlot = () => (
  <Plot $bg="#eeeef8">
    <svg
      viewBox={`${wave.left} ${wave.top} ${wave.width} ${wave.height}`}
      preserveAspectRatio="none"
      fill="none"
      shapeRendering="crispEdges"
    >
      <g stroke="#c4d0cc">
        {samples.map((s) => (
          <path key={s} d={`M${px(waveX(s))} ${wave.top}v${wave.height}`} />
        ))}
        {waveRows.map(({ y }) => (
          <path key={y} d={`M${wave.left} ${y + 0.5}h${wave.width}`} />
        ))}
      </g>
      <path d={`M${wave.left} ${wave.mid + 0.5}h${wave.width}`} stroke="#e6ccd2" />
      <polyline points={wavePoints} stroke={c.wave} transform="translate(0.5 0.5)" />
    </svg>
  </Plot>
);

const WaveLevels = () => (
  <Ruler $right $bottom>
    <svg
      viewBox={`852 ${wave.top} 39 ${wave.height}`}
      preserveAspectRatio="none"
      stroke="#e8eaee"
      shapeRendering="crispEdges"
    >
      {waveRows.concat({ label: "", y: wave.mid }).map(({ y }) => (
        <path key={y} d={`M852 ${y + 0.5}h3`} />
      ))}
      {minorLevels.flatMap((d) => [
        <path key={`u${d}`} d={`M852 ${px(wave.mid - d)}h1`} />,
        <path key={`d${d}`} d={`M852 ${px(wave.mid + d)}h1`} />,
      ])}
    </svg>
    <RowLabel style={{ top: pct(112, wave.top, wave.height) }}>dB</RowLabel>
    <RowLabel style={{ top: pct(wave.mid, wave.top, wave.height) }}>-∞</RowLabel>
    {waveRows.map(({ label, y }) => (
      <RowLabel key={y} style={{ top: pct(y, wave.top, wave.height) }}>
        {label}
      </RowLabel>
    ))}
  </Ruler>
);

const WaveTime = () => (
  <Ruler $bottom $top>
    <svg
      viewBox={`${wave.left} 0 ${wave.width} 16`}
      preserveAspectRatio="none"
      stroke="#e8eaee"
      shapeRendering="crispEdges"
    >
      {minorSamples.map((s) => (
        <path key={s} d={`M${px(waveX(s))} 0v${s % 500 === 0 ? 4 : 2}`} />
      ))}
    </svg>
    <ColumnLabel style={{ left: pct(19, wave.left, wave.width) }}>smpl</ColumnLabel>
    {samples.slice(1, 19).map((s) => (
      <ColumnLabel key={s} style={{ left: pct(waveX(s), wave.left, wave.width) }}>
        {s}
      </ColumnLabel>
    ))}
    <ColumnLabel style={{ left: pct(839, wave.left, wave.width) }}>smpl</ColumnLabel>
  </Ruler>
);

const SpectrumPlot = () => (
  <Plot $bg="#000">
    <svg
      viewBox={`${spec.left} ${spec.top} ${spec.width} ${spec.height}`}
      preserveAspectRatio="none"
      fill="none"
      shapeRendering="crispEdges"
    >
      <g stroke="#606060">
        {[0, ...hzLabels, 55000].map((hz) => (
          <path key={hz} d={`M${px(specX(hz))} ${spec.top}v${spec.height}`} />
        ))}
        {dbRows.map((i) => (
          <path key={i} d={`M${spec.left} ${px(specY(i))}h${spec.width - 1}`} />
        ))}
      </g>
      <polyline points={specPoints} stroke={c.trace} transform="translate(0.5 0.5)" />
    </svg>
  </Plot>
);

const SpectrumLevels = () => (
  <Ruler>
    <svg
      viewBox={`1805 ${spec.top} 36 ${spec.height}`}
      preserveAspectRatio="none"
      stroke="#e8eaee"
      shapeRendering="crispEdges"
    >
      {dbTicks.map((i) => (
        <path key={i} d={`M1806 ${px(specY(i))}h${Number.isInteger(i) ? 3 : 1}`} />
      ))}
    </svg>
    <RowLabel style={{ top: pct(121, spec.top, spec.height) }}>dB</RowLabel>
    {dbRows.slice(1, 33).map((i) => (
      <RowLabel key={i} style={{ top: pct(specY(i), spec.top, spec.height) }}>
        -{84 + i}
      </RowLabel>
    ))}
    <RowLabel style={{ top: pct(specY(33) - 1, spec.top, spec.height) }}>dB</RowLabel>
  </Ruler>
);

const SpectrumHz = () => (
  <Ruler $top>
    <svg
      viewBox={`${spec.left} 0 ${spec.width} 17`}
      preserveAspectRatio="none"
      stroke="#e8eaee"
      shapeRendering="crispEdges"
    >
      {kiloHz.map((k) => (
        <path key={k} d={`M${px(specX(k * 1000))} 0v${k % 5 === 0 ? 4 : 2}`} />
      ))}
    </svg>
    <ColumnLabel style={{ left: pct(917, spec.left, spec.width) }}>Hz</ColumnLabel>
    {hzLabels.map((hz) => (
      <ColumnLabel key={hz} style={{ left: pct(specX(hz), spec.left, spec.width) }}>
        {hz}
      </ColumnLabel>
    ))}
    <ColumnLabel style={{ left: pct(1797, spec.left, spec.width) }}>Hz</ColumnLabel>
  </Ruler>
);

const MeterScale = () => (
  <MeterRuler $top $bg={c.panel}>
    <svg
      viewBox={`${meter.left} 0 ${meter.width} 18`}
      preserveAspectRatio="none"
      stroke="#e8eaee"
      shapeRendering="crispEdges"
    >
      {meterSteps.map((i) => (
        <path key={i} d={`M${px(meterX(i))} 0v${i % 3 === 0 ? 3 : 1}`} />
      ))}
    </svg>
    <ColumnLabel style={{ left: pct(17, meter.left, meter.width) }}>dB</ColumnLabel>
    {meterSteps
      .filter((i) => i > 0 && i % 3 === 0)
      .map((i) => (
        <ColumnLabel key={i} style={{ left: pct(meterX(i), meter.left, meter.width) }}>
          {i === 120 ? "0" : `–${120 - i}`}
        </ColumnLabel>
      ))}
  </MeterRuler>
);

/* ---------- controls ---------- */

const ComboBox = ({ id, name, value, width }: { id: string; name?: string; value: string; width: number }) => (
  <Combo $width={width}>
    <ComboSelect id={id} aria-label={name} defaultValue={value}>
      <option>{value}</option>
    </ComboSelect>
    <ComboArrow />
  </Combo>
);

const Keys = ({ names, cols, after }: { names: string[]; cols: number; after: number }) => (
  <KeyPad $cols={cols} $after={after}>
    {names.map((n) => (
      <Key key={n} aria-label={n}>
        <Icon name={n} />
      </Key>
    ))}
  </KeyPad>
);

const holds = [
  ["1", "#6fb878", "#a8f0a8"],
  ["2", "#b46c70", "#f0b0b0"],
  ["3", "#7474ba", "#b8b8f8"],
  ["4", "#9c9c66", "#f0f09a"],
];

const ranges: [string, string[]][] = [
  ["Sel", ["0", "1046539", "1046539"]],
  ["View", ["517409", "527124", "9715"]],
];
const rangeHeads = ["Begin", "End", "Length"];

export default function App() {
  return (
    <Frame>
      <GlobalStyle />
      <TitleBar>
        <AppLogo />
        <TitleText>impulse dsd64.wav* - Adobe Audition</TitleText>
        <CaptionButton aria-label="Minimize">
          <svg width="15" height="14" viewBox="0 0 15 14">
            <path d="M3 12h7" stroke="#000" strokeWidth="2" />
          </svg>
        </CaptionButton>
        <CaptionButton aria-label="Restore">
          <svg width="15" height="14" viewBox="0 0 15 14" fill="none" stroke="#000">
            <path d="M5.500 4V2.500h7v6H10M5 3h8M2.500 6.500h7v6h-7zM2 7h8" />
          </svg>
        </CaptionButton>
        <CaptionButton aria-label="Close" $apart>
          <svg width="15" height="14" viewBox="0 0 15 14">
            <path d="M4 4l7 7M11 4l-7 7" stroke="#000" strokeWidth="2" />
          </svg>
        </CaptionButton>
      </TitleBar>
      <MenuBar>
        {menus.map(([a, key, b]) => (
          <MenuItem key={a + key + b}>
            {a}
            <u>{key}</u>
            {b}
          </MenuItem>
        ))}
      </MenuBar>
      <Body>
        <Toolbar role="toolbar">
          {toolGroups.map((group, gi) => (
            <ToolGroup key={gi}>
              {group.map((n, i) => (
                <ToolButton key={i} aria-label={n} $pressed={n === "wave" || n === "ibeam"}>
                  <Icon name={n} />
                </ToolButton>
              ))}
            </ToolGroup>
          ))}
        </Toolbar>
        <Panes>
          <WavePane>
            <ScrollTrack>
              <ScrollThumb aria-label="Scroll position" />
            </ScrollTrack>
            <WaveFrame>
              <WavePlot />
              <WaveLevels />
              <WaveTime />
            </WaveFrame>
          </WavePane>
          <Splitter />
          <SpectrumPane>
            <SpectrumBody>
              <PaneGrip />
              <SpectrumHead>
                <CheckLabel>
                  <Check type="checkbox" defaultChecked />
                  Linear View
                </CheckLabel>
                <NoteName>C2 -21</NoteName>
                <HoldSet>
                  <HoldCaption>Hold</HoldCaption>
                  {holds.map(([n, hue, edge]) => (
                    <HoldButton key={n} $hue={hue} $edge={edge}>
                      {n}
                    </HoldButton>
                  ))}
                </HoldSet>
              </SpectrumHead>
              <SpectrumFrame>
                <SpectrumPlot />
                <SpectrumLevels />
                <SpectrumHz />
              </SpectrumFrame>
              <Readouts>
                <Readout>53960 Hz, -203.3 dB</Readout>
                <Readout>64.583 Hz (C2 -21)</Readout>
              </Readouts>
              <Controls>
                <ControlColumn $width={162}>
                  <ControlRow>
                    <ComboBox id="style" name="Graph style" value="Lines" width={144} />
                  </ControlRow>
                  <ControlRow $indent>
                    <label htmlFor="reference">Reference</label>
                    <RefInput id="reference" defaultValue="0" />
                    <span>dBFS</span>
                  </ControlRow>
                </ControlColumn>
                <ControlColumn $fill>
                  <ControlRow>
                    <label htmlFor="fft">FFT Size</label>
                    <ComboBox id="fft" value="65536" width={84} />
                    <ComboBox id="window" name="Window function" value="Hanning" width={135} />
                  </ControlRow>
                  <ControlRow>
                    <PushButton $width={100}>Copy to Clipboard</PushButton>
                  </ControlRow>
                </ControlColumn>
                <ControlColumn>
                  <ControlRow />
                  <ControlRow $end>
                    <PushButton $width={60}>Scan</PushButton>
                    <PushButton $width={80} $lit>
                      Advanced
                    </PushButton>
                  </ControlRow>
                </ControlColumn>
              </Controls>
            </SpectrumBody>
            <PaneFoot />
          </SpectrumPane>
        </Panes>
        <DockRule />
        <Dock>
          <DockGroup>
            <Grip />
            <Keys
              cols={5}
              after={4}
              names={["stop", "play", "pause", "playLoop", "loop", "start", "rewind", "forward", "end", "record"]}
            />
            <DockEdge />
          </DockGroup>
          <DockGroup>
            <Grip />
            <Columns>
              <Keys cols={3} after={2} names={["zoomIn", "zoomOut", "zoomFull", "zoomSel", "zoomLeft", "zoomRight"]} />
              <Keys cols={1} after={4} names={["vZoomIn", "vZoomOut"]} />
            </Columns>
            <DockEdge />
          </DockGroup>
          <DockGroup $fill>
            <Grip />
            <Counter>0</Counter>
            <DockEdge />
          </DockGroup>
          <DockGroup>
            <Grip />
            <Range>
              <span />
              {rangeHeads.map((h) => (
                <span key={h}>{h}</span>
              ))}
              {ranges.map(([name, values]) => (
                <React.Fragment key={name}>
                  <RangeName>{name}</RangeName>
                  {values.map((v, i) => (
                    <RangeCell key={i}>
                      <RangeInput aria-label={`${name} ${rangeHeads[i]}`} defaultValue={v} />
                      {v === "9715" && (
                        <Ring viewBox="0 0 64 26">
                          <ellipse cx="32" cy="13" rx="30" ry="11.500" fill="none" stroke="#f00" strokeWidth="2" />
                        </Ring>
                      )}
                    </RangeCell>
                  ))}
                </React.Fragment>
              ))}
            </Range>
          </DockGroup>
        </Dock>
        <DockRule />
        <MeterDock>
          <Grip />
          <Meter>
            <MeterBar>
              <i />
              <i />
            </MeterBar>
            <MeterScale />
          </Meter>
        </MeterDock>
      </Body>
      <StatusBar>
        <StatusMessage>Completed in 0.06 seconds</StatusMessage>
        <StatusCell $width={135}>-88.4dB @ 527025</StatusCell>
        <StatusCell $width={127}>2822400 • 32-bit • Mono</StatusCell>
        <StatusCell $width={66}>3.99 MB</StatusCell>
        <StatusCell $width={103}>328.09 GB free</StatusCell>
      </StatusBar>
    </Frame>
  );
}
